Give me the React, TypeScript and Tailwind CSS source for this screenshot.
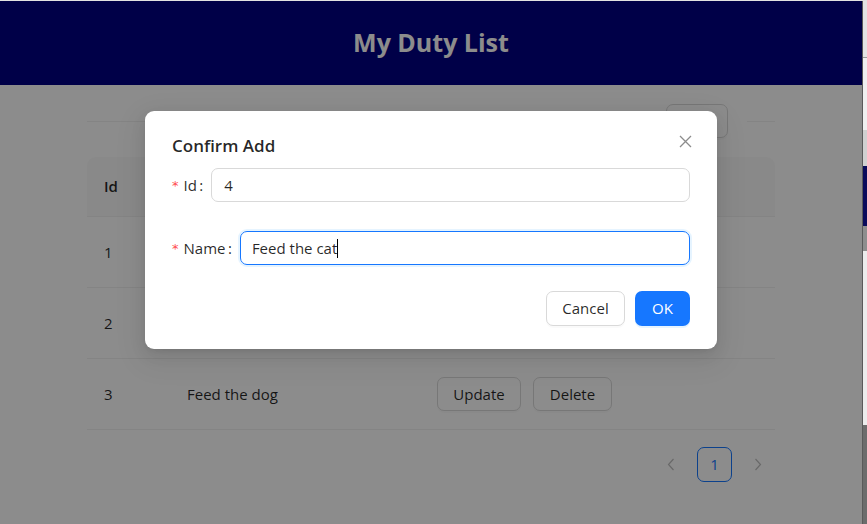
import React from "react";

const font = "font-['Open_Sans','Noto_Sans',sans-serif]";

type Duty = { id: number; name: string };

const duties: Duty[] = [
  { id: 1, name: "Wash the dishes" },
  { id: 2, name: "Take out the trash" },
  { id: 3, name: "Feed the dog" },
];

function Btn({ children, className = "" }: { children: React.ReactNode; className?: string }) {
  return (
    <button
      className={`flex h-[34px] items-center justify-center rounded-[7px] border border-[#d9d9d9] bg-white text-[15px] text-black/85 shadow-[0_2px_0_rgba(0,0,0,0.02)] ${className}`}
    >
      {children}
    </button>
  );
}

function Chevron({ dir }: { dir: "left" | "right" }) {
  return (
    <svg width="8" height="13" viewBox="0 0 8 13" fill="none">
      <path
        d={dir === "left" ? "M6.5 1 1.5 6.5l5 5.5" : "M1.5 1l5 5.5-5 5.5"}
        stroke="#bfbfbf"
        strokeWidth="1.2"
      />
    </svg>
  );
}

function DutyTable() {
  return (
    <div className="mt-[19px] text-[15px] text-black/85">
      <div className="grid h-[60px] grid-cols-[83px_250px_1fr] items-center rounded-t-[9px] border-b border-[#f0f0f0] bg-[#fafafa] font-semibold">
        <div className="pl-[17px]">Id</div>
        <div className="pl-[17px]">Name</div>
        <div className="pl-[17px]">Action</div>
      </div>
      {duties.map((d) => (
        <div key={d.id} className="grid h-[71px] grid-cols-[83px_250px_1fr] items-center border-b border-[#f0f0f0]">
          <div className="pl-[17px]">{d.id}</div>
          <div className="pl-[17px]">{d.name}</div>
          <div className="flex gap-[12px] pl-[17px]">
            <Btn className="w-[84px]">Update</Btn>
            <Btn className="w-[79px]">Delete</Btn>
          </div>
        </div>
      ))}
    </div>
  );
}

function Pagination() {
  return (
    <div className="mt-[17px] flex justify-end gap-[9px]">
      <div className="flex h-[35px] w-[34px] items-center justify-center">
        <Chevron dir="left" />
      </div>
      <div className="flex h-[35px] w-[35px] items-center justify-center rounded-[7px] border border-[#1677ff] text-[15px] text-[#1677ff]">
        1
      </div>
      <div className="flex h-[35px] w-[34px] items-center justify-center">
        <Chevron dir="right" />
      </div>
    </div>
  );
}

function FieldLabel({ text }: { text: string }) {
  return (
    <label className="flex shrink-0 items-center text-[15px] text-black/85">
      <span className="mr-[5px] font-['DejaVu_Sans',sans-serif] text-[13px] leading-none text-[#ff4d4f]">*</span>
      <span className="mr-[8px]">{`${text}\u2009:`}</span>
    </label>
  );
}

function AddModal() {
  return (
    <div className="absolute left-[145px] top-[110px] w-[572px] rounded-[9px] bg-white px-[27px] pb-[23px] pt-[22px] shadow-[0_6px_16px_rgba(0,0,0,0.08),0_3px_6px_-4px_rgba(0,0,0,0.12),0_9px_28px_8px_rgba(0,0,0,0.05)]">
      <button className="absolute right-[25px] top-[24px] h-[13px] w-[13px]" aria-label="Close">
        <svg width="13" height="13" viewBox="0 0 13 13">
          <path d="M1 1l11 11M12 1 1 12" stroke="#8c8c8c" strokeWidth="1.3" />
        </svg>
      </button>
      <h2 className="h-[26px] text-[17px] font-semibold leading-[26px] text-black/85">Confirm Add</h2>
      <div className="mt-[9px] flex h-[34px] items-center">
        <FieldLabel text="Id" />
        <input
          readOnly
          value="4"
          className="h-[34px] flex-1 rounded-[7px] border border-[#d9d9d9] px-[12px] text-[15px] text-black/85 outline-none"
        />
      </div>
      <div className="mt-[29px] flex h-[34px] items-center">
        <FieldLabel text="Name" />
        <div className="flex h-[34px] flex-1 items-center rounded-[7px] border border-[#1677ff] px-[11px] text-[15px] text-black/85 shadow-[0_0_0_2px_rgba(5,145,255,0.1)]">
          Feed the cat
          <span className="h-[19px] w-px bg-black" />
        </div>
      </div>
      <div className="mt-[26px] flex justify-end gap-[10px]">
        <Btn className="h-[35px] w-[79px]">Cancel</Btn>
        <button className="h-[35px] w-[55px] rounded-[7px] bg-[#1677ff] text-[15px] text-white shadow-[0_2px_0_rgba(5,145,255,0.1)]">
          OK
        </button>
      </div>
    </div>
  );
}

function WindowEdge() {
  return (
    <div className="flex w-[5px] flex-col border-l border-[#5a5a5a]">
      <div className="h-[57px] border-b border-[#9a9a9a] bg-[#e4e4e4]" />
      <div className="h-[72px] bg-[#f0f0f0]" />
      <div className="h-[36px] bg-[#d0d0d0]" />
      <div className="h-[60px] bg-[#0a0a5a]" />
      <div className="h-[25px] bg-[#8e8e8e]" />
      <div className="h-[174px] bg-[#ececec]" />
      <div className="flex-1 bg-[#6c6c6c]" />
    </div>
  );
}

export default function App() {
  return (
    <div className={`flex h-screen w-full bg-[#e2e2e2] pt-px ${font}`}>
      <div className="relative h-full w-[862px] overflow-hidden bg-white">
        <header className="flex h-[84px] items-center justify-center bg-[#000083]">
          <h1 className="text-[25px] font-bold text-white">My Duty List</h1>
        </header>
        <main className="mx-auto w-[688px]">
          <div className="mt-[19px] flex h-[34px] items-center">
            <div className="h-px flex-1 bg-[#f0f0f0]" />
            <Btn className="w-[62px]">Add</Btn>
            <div className="w-[19px]" />
            <div className="h-px w-[28px] bg-[#f0f0f0]" />
          </div>
          <DutyTable />
          <Pagination />
        </main>
        <div className="absolute inset-0 bg-black/45" />
        <AddModal />
      </div>
      <WindowEdge />
    </div>
  );
}
